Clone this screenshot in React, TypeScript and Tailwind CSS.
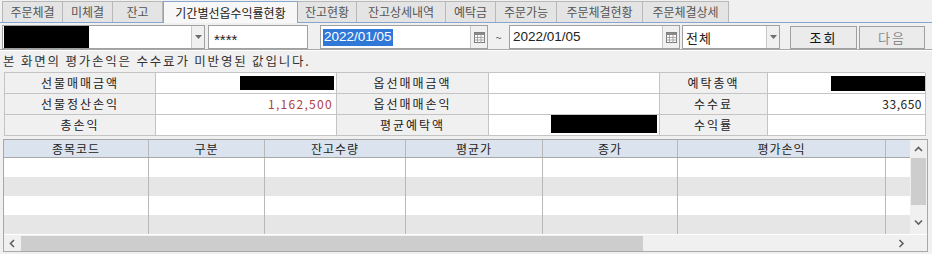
import React from 'react';

const tabs = [
  { label: '주문체결', w: 'w-[61px]' },
  { label: '미체결', w: 'w-[50px]' },
  { label: '잔고', w: 'w-[50px]' },
  { label: '기간별선옵수익률현황', w: 'w-[135px]', active: true },
  { label: '잔고현황', w: 'w-[59px]' },
  { label: '잔고상세내역', w: 'w-[89px]' },
  { label: '예탁금', w: 'w-[50px]' },
  { label: '주문가능', w: 'w-[61px]' },
  { label: '주문체결현황', w: 'w-[86px]' },
  { label: '주문체결상세', w: 'w-[86px]' },
];

const columns = [
  { label: '종목코드', w: 'w-[145px]' },
  { label: '구분', w: 'w-[116px]' },
  { label: '잔고수량', w: 'w-[141px]' },
  { label: '평균가', w: 'w-[137px]' },
  { label: '종가', w: 'w-[135px]' },
  { label: '평가손익', w: 'w-[208px]' },
  { label: '', w: 'w-[24px]' },
];

const DropArrow = () => (
  <div className="w-[13px] h-full bg-[#f0f0f0] border-l border-[#c8c8c8] flex items-center justify-center">
    <svg width="7" height="4" viewBox="0 0 7 4">
      <path d="M0 0h7L3.5 4z" fill="#6d6d6d" />
    </svg>
  </div>
);

const CalButton = () => (
  <div className="w-[17px] h-full bg-[#f0f0f0] border-l border-[#c8c8c8] flex items-center justify-center">
    <svg width="11" height="11" viewBox="0 0 11 11">
      <rect x="0.5" y="0.5" width="10" height="10" fill="#fff" stroke="#7a7a7a" />
      <rect x="0.5" y="0.5" width="10" height="2.5" fill="#8a8a8a" />
      <path d="M3.5 3v7.5M7 3v7.5M0.5 5.5h10M0.5 8h10" stroke="#a5a5a5" strokeWidth="1" />
    </svg>
  </div>
);

const Chevron = ({ dir }: { dir: 'up' | 'down' | 'left' | 'right' }) => {
  const d = {
    up: 'M1 5l3.5-3.5L8 5',
    down: 'M1 1.5L4.5 5 8 1.5',
    left: 'M5 1L1.5 4.5 5 8',
    right: 'M1.5 1L5 4.5 1.5 8',
  }[dir];
  const vertical = dir === 'up' || dir === 'down';
  return (
    <svg width={vertical ? 9 : 7} height={vertical ? 7 : 9} viewBox={vertical ? '0 0 9 7' : '0 0 7 9'}>
      <path d={d} fill="none" stroke="#606060" strokeWidth="1.6" />
    </svg>
  );
};

const Label = ({ children }: { children: React.ReactNode }) => (
  <div className="h-[21px] border-r border-b border-[#c4c4c4] bg-[#f0f0f0] flex items-center justify-center tracking-[2px] text-[#222]">
    {children}
  </div>
);

const Value = ({ children, right }: { children?: React.ReactNode; right?: boolean }) => (
  <div
    className={`h-[21px] border-r border-b border-[#c4c4c4] bg-white flex items-center ${
      right ? 'justify-end pr-[3px]' : ''
    }`}
  >
    {children}
  </div>
);

export default function App() {
  return (
    <div className="w-[932px] h-[254px] overflow-hidden bg-[#f0f0f0] text-[12px] leading-none text-[#222] font-['Noto_Sans_CJK_KR','Liberation_Sans',sans-serif]">
      {/* tabs */}
      <div className="h-[23px] flex items-end pl-[2px] border-b border-[#86a6cf]">
        {tabs.map((t, i) =>
          t.active ? (
            <div
              key={t.label}
              className={`${t.w} h-[22px] -mb-px bg-[#f7f7f7] border border-b-0 border-[#86a6cf] flex items-center justify-center text-[#222]`}
            >
              {t.label}
            </div>
          ) : (
            <div
              key={t.label}
              className={`${t.w} h-[21px] bg-[#e4e4e4] border-t border-r border-[#b8b8b8] ${
                i === 0 ? 'border-l' : ''
              } flex items-center justify-center text-[#555]`}
            >
              {t.label}
            </div>
          )
        )}
      </div>

      {/* search row */}
      <div className="h-[27px] flex items-center pl-[2px] pt-[2px] border-b border-[#a8a8a8]">
        <div className="w-[203px] h-[24px] bg-white border border-[#a0a0a0] flex items-center justify-between">
          <div className="ml-px w-[85px] h-[22px] bg-black" />
          <DropArrow />
        </div>
        <div className="ml-[3px] w-[100px] h-[24px] bg-white border border-[#a0a0a0] flex items-center pl-[5px] pt-[5px] text-[15px] font-['Liberation_Sans',sans-serif]">
          ****
        </div>
        <div className="ml-[12px] w-[168px] h-[24px] bg-white border border-[#a0a0a0] flex items-center justify-between">
          <span className="ml-[2px] px-px h-[17px] flex items-center bg-[#3078d7] text-white text-[13.5px] font-['Liberation_Sans',sans-serif]">
            2022/01/05
          </span>
          <CalButton />
        </div>
        <div className="w-[21px] text-center text-[#555] text-[11px]">~</div>
        <div className="w-[171px] h-[24px] bg-white border border-[#a0a0a0] flex items-center justify-between">
          <span className="ml-[3px] text-[13.5px] font-['Liberation_Sans',sans-serif]">2022/01/05</span>
          <CalButton />
        </div>
        <div className="ml-[2px] w-[98px] h-[24px] bg-white border border-[#a0a0a0] flex items-center justify-between">
          <span className="ml-[3px] text-[13px] tracking-[1px]">전체</span>
          <DropArrow />
        </div>
        <button className="ml-[10px] w-[67px] h-[23px] bg-[#ebebeb] border border-[#a0a0a0] text-[13px] tracking-[2px] text-[#111]">
          조회
        </button>
        <button className="ml-[2px] w-[66px] h-[23px] bg-[#ebebeb] border border-[#a0a0a0] text-[13px] tracking-[2px] text-[#8a8a8a]">
          다음
        </button>
      </div>
      <div className="h-px bg-white" />

      {/* notice */}
      <div className="h-[21px] flex items-center pl-[3px] tracking-[1.8px] text-[12.5px] text-[#333]">
        본 화면의 평가손익은 수수료가 미반영된 값입니다.
      </div>

      {/* summary grid */}
      <div className="ml-[4px] w-[921px] grid grid-cols-[151px_181px_152px_171px_108px_158px] border-t border-l border-[#c4c4c4]">
        <Label>선물매매금액</Label>
        <Value>
          <div className="ml-[84px] w-[94px] h-[14px] bg-black" />
        </Value>
        <Label>옵선매매금액</Label>
        <Value />
        <Label>예탁총액</Label>
        <Value>
          <div className="ml-[63px] w-[94px] h-[15px] bg-black" />
        </Value>

        <Label>선물정산손익</Label>
        <Value right>
          <span className="text-[#b0403c] tracking-[1.3px]">1,162,500</span>
        </Value>
        <Label>옵선매매손익</Label>
        <Value />
        <Label>수수료</Label>
        <Value right>
          <span className="tracking-[0.5px]">33,650</span>
        </Value>

        <Label>총손익</Label>
        <Value />
        <Label>평균예탁액</Label>
        <Value>
          <div className="ml-[62px] w-[106px] h-[18px] mt-[-3px] bg-black" />
        </Value>
        <Label>수익률</Label>
        <Value />
      </div>

      {/* list */}
      <div className="mt-[3px] ml-[3px] w-[925px] h-[113px] border border-[#a8a8a8] bg-[#f0f0f0] flex flex-col">
        <div className="flex h-[94px]">
          <div className="w-[906px] flex flex-col">
            <div className="flex h-[18px] bg-[#dbe4ee] border-b border-[#a8a8a8]">
              {columns.map((c, i) => (
                <div
                  key={i}
                  className={`${c.w} h-full flex items-center justify-center tracking-[1px] ${
                    i < columns.length - 1 ? 'border-r border-[#b8b8b8]' : ''
                  }`}
                >
                  {c.label}
                </div>
              ))}
            </div>
            {[0, 1, 2, 3].map((r) => (
              <div key={r} className={`flex h-[19px] ${r % 2 ? 'bg-[#e6e6e6]' : 'bg-white'}`}>
                {columns.map((c, i) => (
                  <div
                    key={i}
                    className={`${c.w} h-full ${i < columns.length - 1 ? 'border-r border-[#b8b8b8]' : ''}`}
                  />
                ))}
              </div>
            ))}
          </div>
          <div className="w-[17px] flex flex-col bg-[#f0f0f0]">
            <div className="h-[18px] flex items-center justify-center">
              <Chevron dir="up" />
            </div>
            <div className="mx-px h-[47px] bg-[#cdcdcd]" />
            <div className="flex-1 flex items-center justify-center pt-[6px]">
              <Chevron dir="down" />
            </div>
          </div>
        </div>
        <div className="flex h-[17px] border-t border-white">
          <div className="w-[906px] flex items-center">
            <div className="w-[17px] flex items-center justify-center">
              <Chevron dir="left" />
            </div>
            <div className="w-[622px] h-[15px] bg-[#cdcdcd]" />
            <div className="flex-1" />
            <div className="w-[17px] flex items-center justify-center">
              <Chevron dir="right" />
            </div>
          </div>
          <div className="w-[17px]" />
        </div>
      </div>
    </div>
  );
}
